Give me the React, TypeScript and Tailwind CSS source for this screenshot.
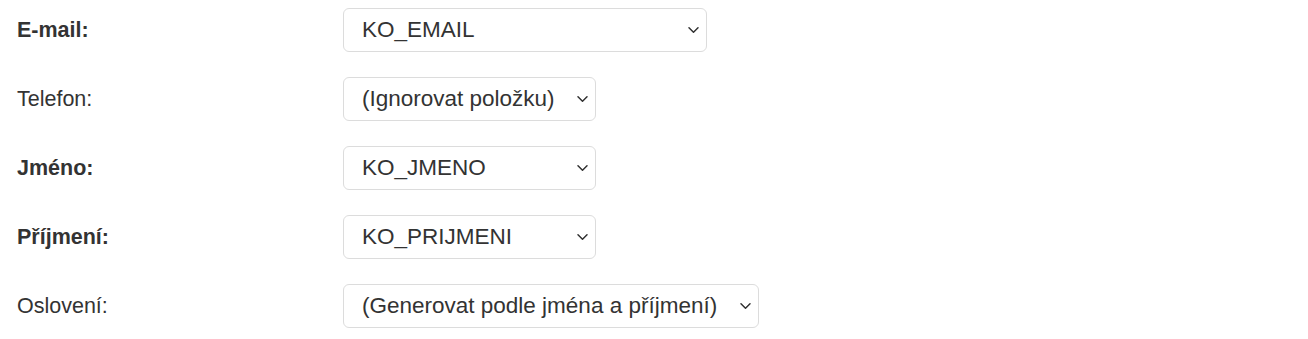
import { useState } from 'react';

const rows = [
  { label: 'E-mail:', bold: true, value: 'KO_EMAIL', width: 'w-[364px]' },
  { label: 'Telefon:', bold: false, value: '(Ignorovat položku)', width: 'w-[253px]' },
  { label: 'Jméno:', bold: true, value: 'KO_JMENO', width: 'w-[253px]' },
  { label: 'Příjmení:', bold: true, value: 'KO_PRIJMENI', width: 'w-[253px]' },
  { label: 'Oslovení:', bold: false, value: '(Generovat podle jména a příjmení)', width: 'w-[416px]' },
];

function Field({ label, bold, value, width }: (typeof rows)[number]) {
  const [v, setV] = useState(value);
  return (
    <div className="flex items-center">
      <label className={`w-[326px] text-[21.5px] text-[#333] ${bold ? 'font-bold' : ''}`}>{label}</label>
      <div className={`relative h-[44px] ${width}`}>
        <select
          value={v}
          onChange={(e) => setV(e.target.value)}
          className="h-full w-full appearance-none rounded-[6px] border border-[#dcdcdc] bg-white pl-[18px] pr-8 text-[22.5px] text-[#333] outline-none"
        >
          <option>{value}</option>
        </select>
        {/* chevron */}
        <svg
          className="pointer-events-none absolute right-[8px] top-1/2 -translate-y-1/2"
          width="11"
          height="7"
          viewBox="0 0 11 7"
          fill="none"
        >
          <path d="M1 1.2l4.5 4.5 4.5-4.5" stroke="#333" strokeWidth="1.5" strokeLinecap="round" strokeLinejoin="round" />
        </svg>
      </div>
    </div>
  );
}

export default function App() {
  return (
    <div className="min-h-screen bg-white px-[17px] pt-[8px] font-['Liberation_Sans',Arial,sans-serif]">
      <div className="flex flex-col gap-[25px]">
        {rows.map((r) => (
          <Field key={r.label} {...r} />
        ))}
      </div>
    </div>
  );
}
